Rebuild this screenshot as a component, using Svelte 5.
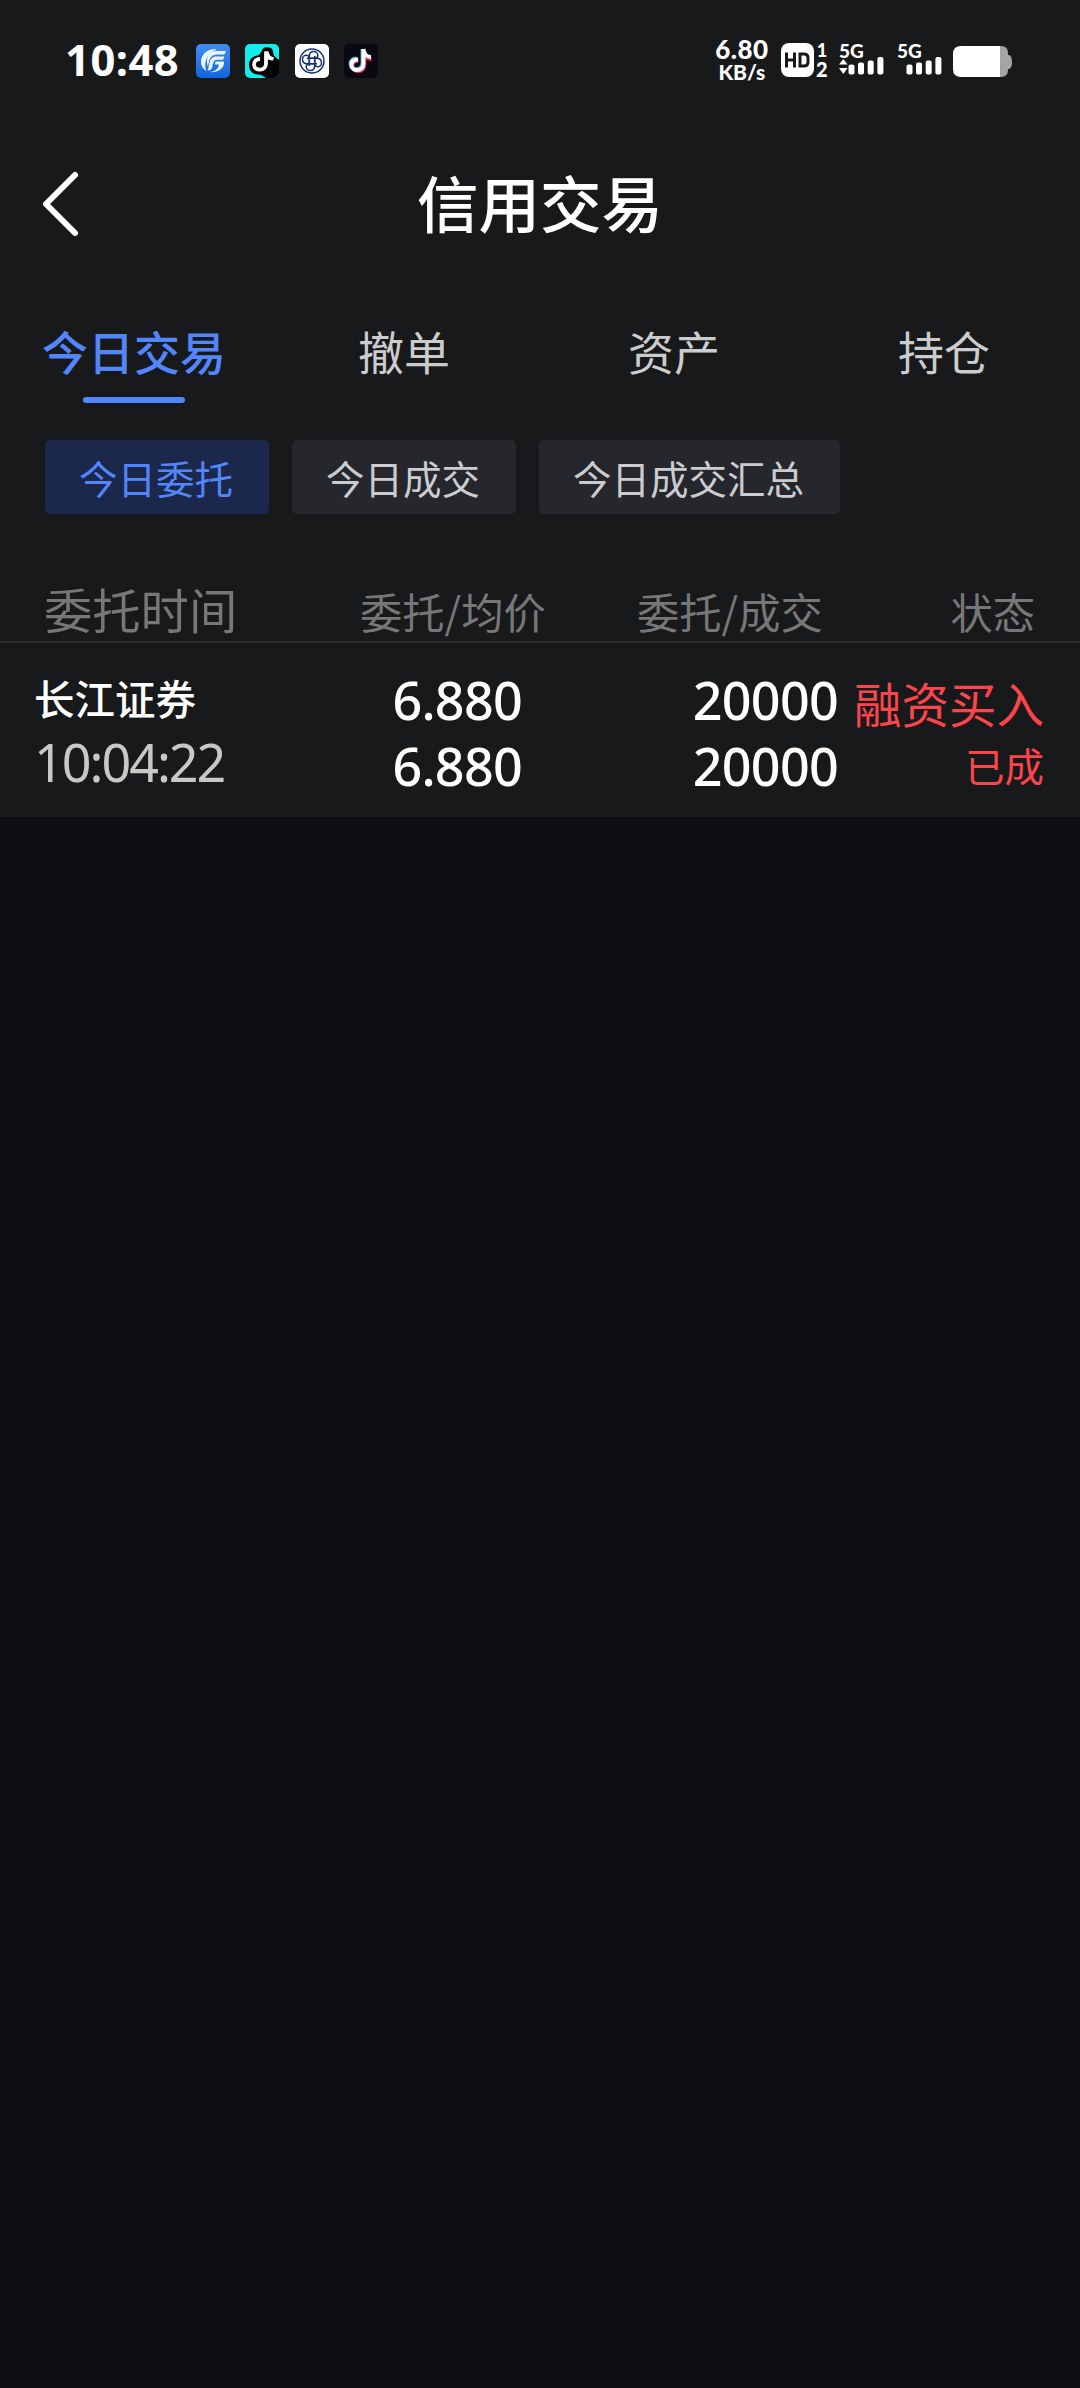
<script>
  const tabs = ['今日交易', '撤单', '资产', '持仓'];
  const filters = ['今日委托', '今日成交', '今日成交汇总'];
  let tab = $state(0);
  let filter = $state(0);
</script>

{#snippet signal(active)}
  <div class="signal">
    <span>5G</span>
    <svg width="46" height="18" viewBox="0 0 46 18">
      {#if active}
        <path d="M0 7.500l4.300-5.500 4.300 5.500zM0 11l4.300 6 4.300-6z" />
      {/if}
      <rect x="9.500" y="7.500" width="6" height="10" rx="2" />
      <rect x="19" y="5.500" width="6" height="12" rx="2" />
      <rect x="28.700" y="3.500" width="6" height="14" rx="2" />
      <rect x="38.400" y="0" width="6" height="17.500" rx="2" />
    </svg>
  </div>
{/snippet}

<div class="screen">
  <div class="panel">
    <header class="status">
      <span class="clock">10:48</span>
      <div class="apps">
        <svg width="34" height="34" viewBox="0 0 34 34">
          <defs><linearGradient id="blue" x1="0" y1="0" x2="0" y2="1"><stop offset="0" stop-color="#438ced" /><stop offset="1" stop-color="#1265dc" /></linearGradient></defs>
          <rect width="34" height="34" rx="5" fill="url(#blue)" />
          <g fill="#e9f6ff">
            <path d="M21 5.500C12 4 5 10 5 18c0 4 2 7 5.500 9C7 19 11 9 21 5.500z" />
            <path d="M30 7l-1.500 3.500H21c-6 0-8 4-9 12.500C9 14 13 7 20.500 7z" />
            <path d="M28.500 12.500L27 15.700h-6c-3.500 0-3.700 3-4.500 6.500-.6 3-2 4.300-5 4.300C14 23 12 12.500 20.500 12.500z" />
            <path d="M19.500 17.500H28c.5 6.500-5.500 11.500-14.500 10.500 5 0 9-3 9.500-7.500h-4z" />
          </g>
        </svg>
        <svg width="34" height="34" viewBox="0 0 34 34">
          <defs><clipPath id="tile"><rect width="34" height="34" rx="5" /></clipPath></defs>
          <g clip-path="url(#tile)">
            <rect width="34" height="34" fill="#12eeee" />
            <path d="M18 4.500c2-2 8-1.500 9.500 1L29 12l5 4v18H21c-4-3-5-3-8-3.500C7 30 4 26 4 21c0-6 4-9 9-9.500 2-1 4-5 5-7z" fill="#050505" />
            <path d="M21 7.500v12c0 8-12 8-12 1 0-4 3-5.500 6-5.500" fill="none" stroke="#fff" stroke-width="3.800" />
            <path d="M20 7.500h3.500c.5 3.500 2.500 5.500 5.500 6l-1 3c-3 0-5-1-6-2z" fill="#fff" />
          </g>
        </svg>
        <svg width="34" height="34" viewBox="0 0 34 34">
          <rect width="34" height="34" rx="5" fill="#fff" />
          <g fill="none" stroke="#17336f" stroke-width="1.500">
            <circle cx="17" cy="17" r="12" />
            {#each [0, 90, 180, 270] as turn}
              <g transform="rotate({turn} 17 17)">
                <path d="M14.300 21V12.500c0-3.500 2-5 4.500-5 2.700 0 4 2 4 3.700 0 2-1.300 3.100-3 3.100H12" />
              </g>
            {/each}
          </g>
        </svg>
        <svg width="34" height="34" viewBox="0 0 34 34">
          <rect width="34" height="34" rx="5" fill="#0b0813" />
          <g fill="none" stroke-width="3.800">
            <path d="M20.500 7v14c0 8-12 8-12 1 0-4 3-5.500 6-5.500M20 8c.7 5 4 7 7.500 7.200" stroke="#e33258" />
            <path d="M18.500 5v14c0 8-12 8-12 1 0-4 3-5.500 6-5.500" stroke="#5cc9d8" />
            <path d="M19.500 5v15c0 8-12 8-12 1 0-4 3-5.500 6.500-5.500M19.500 5c.5 5 3.500 8 7.500 8" stroke="#fff" />
          </g>
        </svg>
      </div>
      <div class="speed"><span>6.80</span><span class="unit">KB/s</span></div>
      <svg class="hd" width="33" height="34" viewBox="0 0 33 34">
        <rect width="33" height="34" rx="8" fill="#fff" />
        <path d="M5.500 9.500v15M13.500 9.500v15M5.500 17h8M19 11v12h4q4 0 4-4v-4q0-4-4-4z" fill="none" stroke="#17181a" stroke-width="3" />
      </svg>
      <div class="sims"><span>1</span><span class="current">2</span></div>
      {@render signal(true)}
      {@render signal(false)}
      <svg class="battery" width="60" height="32" viewBox="0 0 60 32">
        <path d="M47 0h1q7 0 7 7v2h1q3 1 3 7t-3 7h-1v1q0 7-7 7h-1z" fill="#a5a5a5" />
        <path d="M8 0h39v31H8q-8 0-8-8V8q0-8 8-8z" fill="#fff" />
      </svg>
    </header>

    <div class="titlebar">
      <button class="back" aria-label="返回">
        <svg width="40" height="68" viewBox="0 0 40 68"><path d="M35 5L6 34l29 29" fill="none" stroke="#fff" stroke-width="6" stroke-linecap="round" stroke-linejoin="round" /></svg>
      </button>
      <h1>信用交易</h1>
    </div>

    <nav class="tabs">
      {#each tabs as label, i}
        <button class:active={tab === i} onclick={() => (tab = i)}>{label}</button>
      {/each}
    </nav>

    <div class="filters">
      {#each filters as label, i}
        <button class:active={filter === i} onclick={() => (filter = i)}>{label}</button>
      {/each}
    </div>

    <div class="head">
      <span class="h-time">委托时间</span>
      <span>委托/均价</span>
      <span>委托/成交</span>
      <span class="h-state">状态</span>
    </div>

    <div class="order">
      <div class="cell name"><span class="stock">长江证券</span><span class="time">10:04:22</span></div>
      <div class="cell price"><span>6.880</span><span>6.880</span></div>
      <div class="cell amount"><span>20000</span><span>20000</span></div>
      <div class="cell state"><span class="kind">融资买入</span><span class="done">已成</span></div>
    </div>
  </div>
</div>

<style>
  :global(body) { background: #0e0f13; }
  .screen {
    width: 1080px;
    height: 2388px;
    background: #0e0f13;
    color: #fff;
    font-family: 'Noto Sans', 'Noto Sans CJK SC', sans-serif;
  }
  .panel { height: 817px; background: #18191b; }
  button { border: 0; padding: 0; margin: 0; background: none; color: inherit; font-family: 'Noto Sans CJK SC', sans-serif; }
  svg { display: block; flex: none; }
  .status { display: flex; height: 122px; padding-left: 65px; box-sizing: border-box; align-items: flex-start; }
  .clock { width: 131px; padding-top: 29px; font-size: 43.500px; line-height: 60px; font-weight: 700; letter-spacing: 0.5px; }
  .apps { display: flex; gap: 15.300px; padding-top: 44px; }
  .speed { width: 60px; margin-left: 334px; padding-top: 37px; display: flex; flex-direction: column; align-items: center; font: 900 26px/24px Lato, sans-serif; letter-spacing: 0.5px; }
  .unit { font-size: 21px; line-height: 22px; letter-spacing: 0; }
  .hd { margin: 43px 0 0 9px; }
  .sims { display: flex; flex-direction: column; width: 14px; margin: 41px 0 0 1px; font: 900 18px/18px Lato, sans-serif; align-items: center; }
  .current { font-size: 20px; line-height: 20px; }
  .signal { width: 46px; margin: 41px 0 0 10px; font: 900 19px/20px Lato, sans-serif; }
  .signal + .signal { margin-left: 12px; }
  .signal span { display: block; height: 16px; }
  .signal svg { fill: #fff; }
  .battery { margin: 46px 0 0 10px; }
  .titlebar { display: grid; grid-template-columns: 118px 1fr 118px; height: 164px; align-items: center; }
  .back { padding-left: 40px; }
  h1 { margin: 0 0 5px; text-align: center; font: 500 61.500px/90px 'Noto Sans CJK SC', sans-serif; }
  .tabs { display: grid; grid-template-columns: repeat(4, 1fr); height: 154px; margin-left: -1px; margin-right: 1px; }
  .tabs button { display: flex; flex-direction: column; align-items: center; padding-top: 30px; color: #cbcccd; font-size: 46px; line-height: 68px; }
  .tabs .active { color: #5386fa; font-weight: 500; }
  .tabs .active::after { content: ''; width: 102px; height: 6px; margin-top: 13px; border-radius: 3px; background: #5386fa; }
  .filters { display: flex; gap: 23px; padding-left: 45px; height: 74px; }
  .filters button { padding: 0 36px 0 34px; border-radius: 5px; background: #26272c; color: #cbcccf; font-size: 38.500px; line-height: 74px; }
  .filters .active { background: #1b284c; color: #5386fa; }
  .head { display: grid; grid-template-columns: 316px 277px 261px 137px; align-items: baseline; height: 126px; box-sizing: border-box; border-bottom: 2px solid #2a2c2e; font: 42.300px/60px 'Noto Sans CJK SC', sans-serif; color: #777; margin-top: 3px; padding: 61px 44px 0; }
  .h-time { font-size: 48.300px; }
  .h-state { text-align: right; }
  .order { display: grid; grid-template-columns: 340px 182px 316px 206px; padding-top: 24px; }
  .cell { display: flex; flex-direction: column; white-space: nowrap; font-size: 52px; line-height: 66px; align-items: flex-end; }
  .name { align-items: flex-start; padding-left: 34px; }
  .stock { font: 500 40.500px/62px 'Noto Sans CJK SC', sans-serif; }
  .time { font-size: 52px; line-height: 66px; color: #c8c8c8; letter-spacing: -2px; }
  .price, .amount { font-weight: 500; letter-spacing: -0.700px; }
  .state { color: #fc454b; font-family: 'Noto Sans CJK SC', sans-serif; }
  .kind { font-size: 47.500px; line-height: 71px; }
  .done { font-size: 39.500px; line-height: 53px; }
</style>
